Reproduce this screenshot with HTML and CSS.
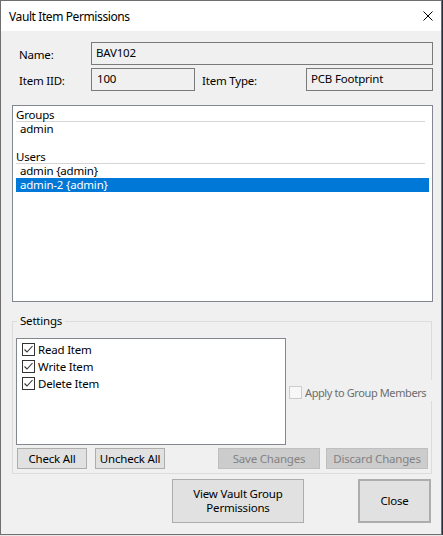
FILE: index.html
```html
<!DOCTYPE html>
<html>
<head>
<meta charset="utf-8">
<link rel="stylesheet" href="styles.css">
</head>
<body>
<div class="window">
  <div class="titlebar">
    <span class="title">Vault Item Permissions</span>
    <svg class="close-x" width="10" height="10" viewBox="0 0 10 10"><path d="M0.5 0.5 L9.5 9.5 M9.5 0.5 L0.5 9.5" stroke="#000" stroke-width="1" fill="none"/></svg>
  </div>
  <div class="content">
    <div class="form">
      <div class="form-row">
        <span class="label">Name:</span>
        <div class="field field-name">BAV102</div>
      </div>
      <div class="form-row form-row2">
        <span class="label">Item IID:</span>
        <div class="field field-iid">100</div>
        <span class="label label-type">Item Type:</span>
        <div class="field field-type">PCB Footprint</div>
      </div>
    </div>

    <div class="listbox">
      <div class="list-header">Groups</div>
      <div class="list-item">admin</div>
      <div class="list-item"></div>
      <div class="list-header">Users</div>
      <div class="list-item">admin {admin}</div>
      <div class="list-item selected">admin-2 {admin}</div>
    </div>

    <div class="group">
      <span class="group-title">Settings</span>
      <div class="settings-row">
        <div class="checklist">
          <div class="check-row"><span class="cb"><svg width="11" height="11" viewBox="0 0 11 11"><path d="M1.5 5.5 L4 8 L9.5 2" stroke="#333" stroke-width="1.1" fill="none"/></svg></span><span>Read Item</span></div>
          <div class="check-row"><span class="cb"><svg width="11" height="11" viewBox="0 0 11 11"><path d="M1.5 5.5 L4 8 L9.5 2" stroke="#333" stroke-width="1.1" fill="none"/></svg></span><span>Write Item</span></div>
          <div class="check-row"><span class="cb"><svg width="11" height="11" viewBox="0 0 11 11"><path d="M1.5 5.5 L4 8 L9.5 2" stroke="#333" stroke-width="1.1" fill="none"/></svg></span><span>Delete Item</span></div>
        </div>
        <div class="apply">
          <span class="cb cb-disabled"></span>
          <span class="apply-label">Apply to Group Members</span>
        </div>
      </div>
      <div class="btn-row">
        <button class="btn btn-small btn-check">Check All</button>
        <button class="btn btn-small btn-uncheck">Uncheck All</button>
        <button class="btn btn-wide btn-disabled btn-save">Save Changes</button>
        <button class="btn btn-wide btn-disabled btn-discard">Discard Changes</button>
      </div>
    </div>

    <div class="footer">
      <button class="btn btn-big btn-view">View Vault Group<br>Permissions</button>
      <button class="btn btn-big btn-close">Close</button>
    </div>
  </div>
</div>
</body>
</html>
```

FILE: styles.css
```css
html, body {
  margin: 0;
  padding: 0;
}
body {
  width: 443px;
  height: 536px;
  background: #e9e9e9;
  overflow: hidden;
}
.window {
  width: 442px;
  height: 535px;
  box-sizing: border-box;
  border: 1px solid #6f6f6f;
  background: #f0f0f0;
  font-family: "Noto Sans", "Open Sans", sans-serif;
  font-size: 11.5px;
  letter-spacing: -0.2px;
  color: #000;
  display: flex;
  flex-direction: column;
  box-shadow: 1px 0 0 #26313d;
}
.titlebar {
  height: 30px;
  flex: 0 0 30px;
  background: #fff;
  display: flex;
  align-items: center;
  justify-content: space-between;
  padding-left: 8px;
}
.title {
  font-size: 12px;
  letter-spacing: -0.4px;
  line-height: 15px;
  margin-top: 1px;
}
.close-x {
  margin-right: 8px;
}
.content {
  padding: 11px 8px 0 11px;
  display: flex;
  flex-direction: column;
}
.form {
  margin-left: 7px;
}
.form-row {
  display: flex;
  align-items: center;
  height: 23px;
}
.form-row2 {
  margin-top: 3px;
}
.label {
  width: 72px;
  flex: 0 0 72px;
  line-height: 15px;
  margin-top: 1px;
}
.label-type {
  margin-left: 7px;
  width: 104px;
  flex: 0 0 104px;
}
.field {
  box-sizing: border-box;
  height: 23px;
  border: 1px solid #7a7a7a;
  background: #f0f0f0;
  padding: 2px 4px 0 4px;
  line-height: 15px;
  white-space: nowrap;
}
.field-name { width: 342px; }
.field-iid { width: 104px; padding-left: 5px; }
.field-type { width: 127px; }

.listbox {
  margin-top: 14px;
  box-sizing: border-box;
  height: 197px;
  border: 1px solid #828790;
  background: #fff;
  padding: 2px 3px;
}
.list-header {
  height: 13px;
  line-height: 13px;
  border-bottom: 1px solid #d5d5d5;
  margin-right: 4px;
}
.list-item {
  height: 14px;
  line-height: 14px;
  padding-left: 4px;
}
.list-item.selected {
  background: #0078d7;
  color: #fff;
}

.group {
  position: relative;
  margin-top: 19px;
  margin-right: 1px;
  border: 1px solid #dcdcdc;
  padding: 16px 0 4px 3px;
}
.group-title {
  position: absolute;
  top: -9px;
  left: 4px;
  padding: 0 3px;
  line-height: 15px;
  background: #f0f0f0;
}
.settings-row {
  display: flex;
  align-items: flex-start;
}
.checklist {
  box-sizing: border-box;
  width: 270px;
  height: 107px;
  flex: 0 0 270px;
  border: 1px solid #828790;
  background: #fff;
  padding: 2px 0 0 5px;
}
.check-row {
  display: flex;
  align-items: center;
  height: 17px;
  line-height: 15px;
}
.cb {
  box-sizing: border-box;
  width: 13px;
  height: 13px;
  flex: 0 0 13px;
  border: 1px solid #333;
  background: #fff;
  margin-right: 3px;
  display: flex;
  align-items: center;
  justify-content: center;
}
.cb svg { display: block; }
.cb-disabled {
  border-color: #cccccc;
  background: #f7f7f7;
}
.apply {
  flex: 1;
  margin-left: 3px;
  margin-right: -1px;
  margin-top: 42px;
  height: 21px;
  box-sizing: border-box;
  padding-top: 6px;
  display: flex;
  align-items: flex-start;
  background: #f0f0f0;
}
.apply-label {
  color: #6d6d6d;
  font-size: 11px;
  letter-spacing: -0.4px;
  line-height: 13px;
  white-space: nowrap;
}
.btn-row {
  display: flex;
  margin-top: 3px;
}
.btn {
  box-sizing: border-box;
  font-family: "Noto Sans", "Open Sans", sans-serif;
  font-size: 11.5px;
  letter-spacing: -0.2px;
  color: #000;
  background: #e1e1e1;
  border: 1px solid #adadad;
  padding: 0;
  margin: 0;
  line-height: 14px;
  text-align: center;
}
.btn-small {
  width: 70px;
  height: 21px;
}
.btn-check { margin-left: 1px; }
.btn-uncheck { margin-left: 8px; }
.btn-wide {
  width: 102px;
  height: 21px;
}
.btn-save { margin-left: auto; }
.btn-discard { margin-left: 6px; margin-right: 3px; }
.btn-disabled {
  background: #cccccc;
  border-color: #bfbfbf;
  color: #838383;
}
.footer {
  display: flex;
  justify-content: flex-end;
  margin-top: 5px;
  padding-right: 2px;
}
.btn-big {
  height: 44px;
}
.btn-view {
  width: 132px;
  margin-right: 54px;
  line-height: 14px;
}
.btn-close {
  width: 73px;
  border: 2px solid #adadad;
}
```
